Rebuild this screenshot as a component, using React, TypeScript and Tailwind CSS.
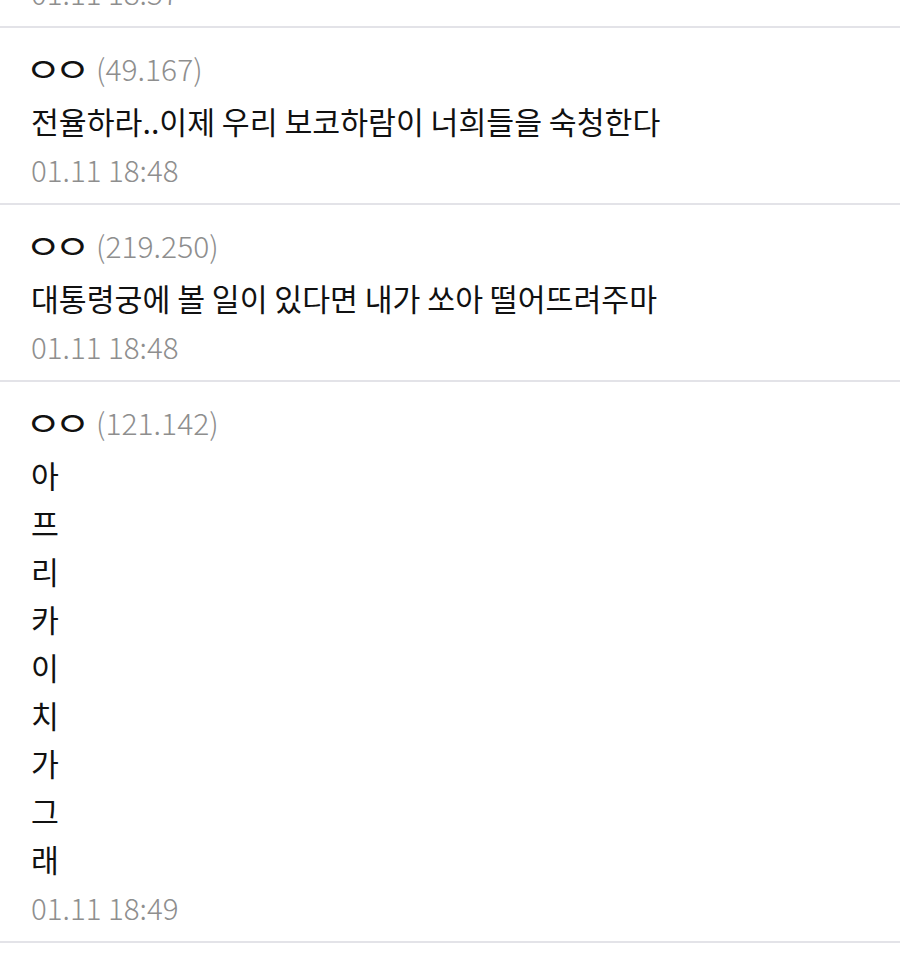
import React from "react";

type Item = { ip: string; lines: string[]; date: string };

const items: Item[] = [
  { ip: "49.167", lines: ["전율하라..이제 우리 보코하람이 너희들을 숙청한다"], date: "01.11 18:48" },
  { ip: "219.250", lines: ["대통령궁에 볼 일이 있다면 내가 쏘아 떨어뜨려주마"], date: "01.11 18:48" },
  { ip: "121.142", lines: ["아", "프", "리", "카", "이", "치", "가", "그", "래"], date: "01.11 18:49" },
];

const font = { fontFamily: '"Noto Sans CJK KR", "Noto Sans", sans-serif' };

function Comment({ item }: { item: Item }) {
  return (
    <div className="border-b-2 border-[#e3e3e8] pl-[31px] pt-4 pb-[10px]">
      <div className="h-[48px] mb-[5px] flex items-center whitespace-nowrap">
        <span className="inline-block -ml-[6px] w-[71px] text-[33px] leading-[48px] tracking-[-6px] text-[#111] origin-left scale-x-[1.2]">ㅇㅇ</span>
        <span className="text-[#8e8e8e] font-light text-[30px] leading-[48px]">({item.ip})</span>
      </div>
      {item.lines.map((l, i) => (
        <div key={i} className="text-[30.3px] leading-[48px] text-[#111] whitespace-nowrap">
          {l}
        </div>
      ))}
      <div className="text-[29.5px] leading-[48px] text-[#8e8e8e] font-light whitespace-nowrap">{item.date}</div>
    </div>
  );
}

export default function App() {
  return (
    <div className="w-[900px] h-[953px] overflow-hidden bg-white" style={font}>
      <div className="-mt-[32px]">
        <div className="border-b-2 border-[#e3e3e8] pl-[31px] pb-[10px]">
          <div className="text-[29.5px] leading-[48px] text-[#8e8e8e] font-light">01.11 18:57</div>
        </div>
        {items.map((it, i) => (
          <Comment key={i} item={it} />
        ))}
      </div>
    </div>
  );
}
